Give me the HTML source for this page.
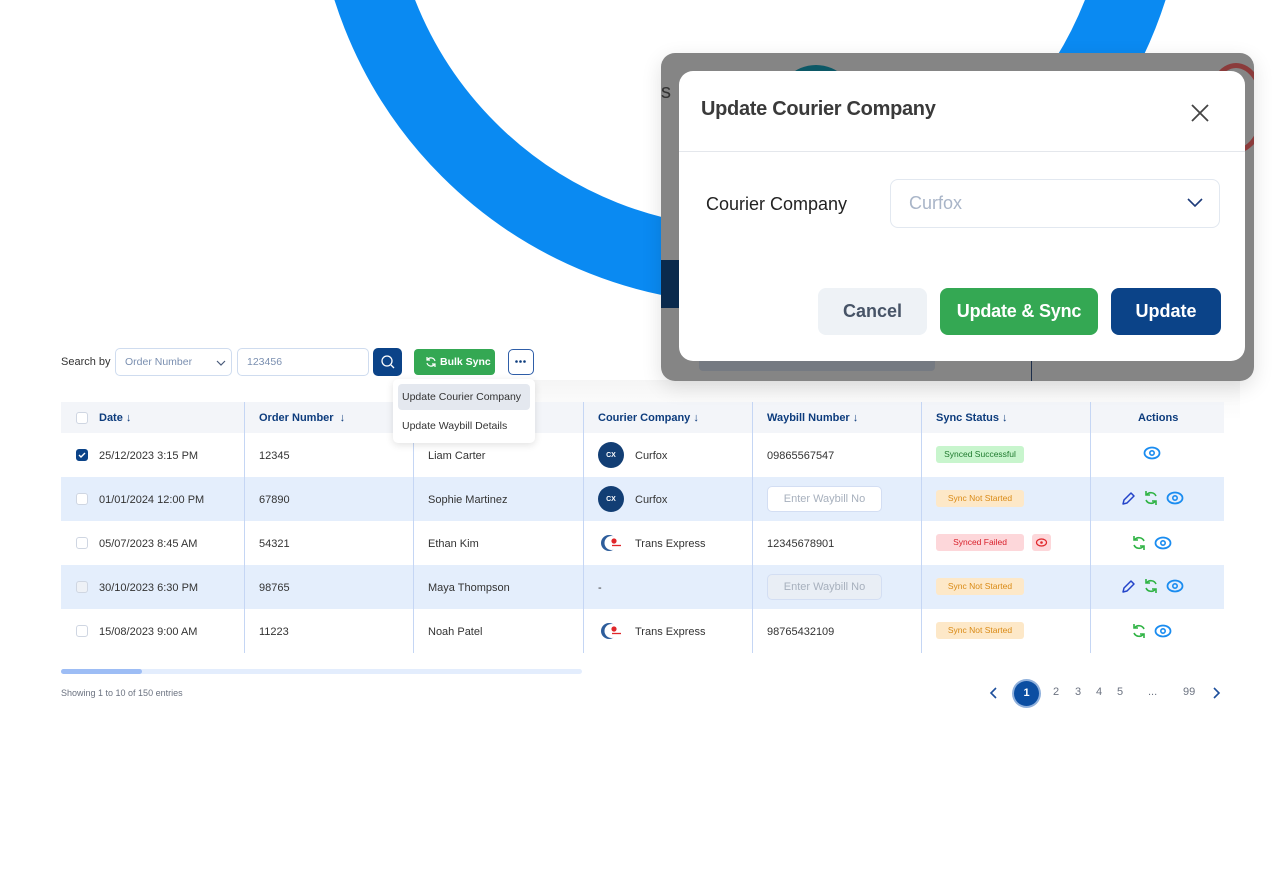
<!DOCTYPE html>
<html><head><meta charset="utf-8">
<style>
*{box-sizing:border-box;margin:0;padding:0}
body{width:1280px;height:888px;background:#fff;position:relative;overflow:hidden;font-family:"Liberation Sans",sans-serif;color:#333}
.a{position:absolute}
.t{font-size:11px;color:#333;white-space:nowrap}
.h{font-size:11px;font-weight:bold;color:#0d3c7d;white-space:nowrap}
.row{position:absolute;left:61px;width:1163px;height:44px}
.vl{position:absolute;top:402px;width:1px;height:251px;background:#c5d6f4}
.cb{position:absolute;width:12px;height:12px;border:1px solid #cfd6e2;border-radius:3px;background:#fff}
.badge{position:absolute;height:17px;border-radius:3px;font-size:8.5px;line-height:17px;text-align:center;white-space:nowrap}
.ns{background:#fde8c8;color:#d98a16;width:88px}
.logo{position:absolute;width:26px;height:26px;border-radius:50%;background:#123e74;color:#fff;font-size:7px;display:flex;align-items:center;justify-content:center;font-weight:bold}
.wb{position:absolute;width:115px;height:26px;border:1px solid #d3def3;border-radius:5px;font-size:11px;color:#a7b0bd;text-align:center;line-height:24px}
.pg{position:absolute;top:686px;font-size:11px;color:#6b7280}
</style></head><body>
<svg class="a" style="left:0;top:0" width="1280" height="888">
<circle cx="750" cy="-132" r="398" fill="none" stroke="#0a8af2" stroke-width="76"/>
</svg>
<div class="a" style="left:420px;top:380px;width:820px;height:40px;background:linear-gradient(180deg,rgba(0,0,0,0.04),rgba(0,0,0,0))"></div>

<!-- toolbar -->
<div class="a t" style="left:61px;top:356px">Search by</div>
<div class="a" style="left:115px;top:348px;width:117px;height:28px;border:1px solid #cfdcef;border-radius:5px;font-size:10.5px;color:#7a8fb0;padding:7px 9px">Order Number
<svg class="a" style="left:100px;top:10px" width="10" height="8"><path d="M1 2l4 4 4-4" stroke="#4a5b7a" fill="none" stroke-width="1.2"/></svg></div>
<div class="a" style="left:237px;top:348px;width:132px;height:28px;border:1px solid #cfdcef;border-radius:5px;font-size:10.5px;color:#7a8fb0;padding:7px 9px">123456</div>
<div class="a" style="left:373px;top:348px;width:29px;height:28px;background:#0b4388;border-radius:5px">
<svg width="29" height="28"><circle cx="14" cy="13" r="5" stroke="#fff" stroke-width="1.3" fill="none"/><path d="M18 17l3 3" stroke="#fff" stroke-width="1.3"/></svg></div>
<div class="a" style="left:414px;top:349px;width:81px;height:26px;background:#34a853;border-radius:4px;color:#fff;font-size:10.5px;font-weight:bold;line-height:26px;padding-left:26px;white-space:nowrap">Bulk Sync
<svg class="a" style="left:11px;top:7px" width="12" height="12"><path d="M10 5A4.3 4.3 0 0 0 2.5 3.5M2 7a4.3 4.3 0 0 0 7.5 1.5" stroke="#fff" stroke-width="1.2" fill="none"/><path d="M2 1v3h3M10 11V8H7" stroke="#fff" stroke-width="1.2" fill="none"/></svg></div>
<div class="a" style="left:508px;top:349px;width:26px;height:26px;border:1.5px solid #2f5ea8;border-radius:5px">
<svg width="23" height="23"><circle cx="7.5" cy="11.5" r="1.3" fill="#0d3c7d"/><circle cx="11.5" cy="11.5" r="1.3" fill="#0d3c7d"/><circle cx="15.5" cy="11.5" r="1.3" fill="#0d3c7d"/></svg></div>

<!-- table -->
<div class="row" style="top:402px;height:31px;background:#f3f5f9"></div>
<div class="row" style="top:477px;background:#e4eefc"></div>
<div class="row" style="top:565px;background:#e4eefc"></div>
<div class="vl" style="left:244px"></div><div class="vl" style="left:413px"></div><div class="vl" style="left:583px"></div><div class="vl" style="left:752px"></div><div class="vl" style="left:921px"></div><div class="vl" style="left:1090px"></div>

<div class="cb" style="left:76px;top:412px"></div>
<div class="a h" style="left:99px;top:412px">Date ↓</div>
<div class="a h" style="left:259px;top:412px">Order Number &nbsp;↓</div>
<div class="a h" style="left:598px;top:412px">Courier Company ↓</div>
<div class="a h" style="left:767px;top:412px">Waybill Number ↓</div>
<div class="a h" style="left:936px;top:412px">Sync Status ↓</div>
<div class="a h" style="left:1138px;top:412px">Actions</div>

<!-- row1 -->
<div class="cb" style="left:76px;top:449px;background:#0b4388;border-color:#0b4388"><svg class="a" style="left:0px;top:0px" width="10" height="10"><path d="M2 5l2 2 4-4" stroke="#fff" stroke-width="1.4" fill="none"/></svg></div>
<div class="a t" style="left:99px;top:450px">25/12/2023 3:15 PM</div>
<div class="a t" style="left:259px;top:450px">12345</div>
<div class="a t" style="left:428px;top:450px">Liam Carter</div>
<div class="logo" style="left:598px;top:442px">CX</div>
<div class="a t" style="left:635px;top:450px">Curfox</div>
<div class="a t" style="left:767px;top:450px">09865567547</div>
<div class="badge" style="left:936px;top:446px;width:88px;background:#c8f5cd;color:#1f7a2e">Synced Successful</div>

<!-- row2 -->
<div class="cb" style="left:76px;top:493px"></div>
<div class="a t" style="left:99px;top:494px">01/01/2024 12:00 PM</div>
<div class="a t" style="left:259px;top:494px">67890</div>
<div class="a t" style="left:428px;top:494px">Sophie Martinez</div>
<div class="logo" style="left:598px;top:486px">CX</div>
<div class="a t" style="left:635px;top:494px">Curfox</div>
<div class="wb" style="left:767px;top:486px;background:#fff">Enter Waybill No</div>
<div class="badge ns" style="left:936px;top:490px">Sync Not Started</div>

<!-- row3 -->
<div class="cb" style="left:76px;top:537px"></div>
<div class="a t" style="left:99px;top:538px">05/07/2023 8:45 AM</div>
<div class="a t" style="left:259px;top:538px">54321</div>
<div class="a t" style="left:428px;top:538px">Ethan Kim</div>
<svg class="a" style="left:598px;top:532px" width="26" height="22"><circle cx="11" cy="11" r="8" fill="#2d5d9b"/><circle cx="13.5" cy="11" r="7" fill="#fff"/><circle cx="16" cy="9" r="2.6" fill="#e0262a"/><path d="M14 13.5h9" stroke="#e0262a" stroke-width="1.3"/></svg>
<div class="a t" style="left:635px;top:538px">Trans Express</div>
<div class="a t" style="left:767px;top:538px">12345678901</div>
<div class="badge" style="left:936px;top:534px;width:88px;background:#fdd7da;color:#d81f2a">Synced Failed</div>
<div class="badge" style="left:1032px;top:534px;width:19px;background:#fdd7da"><svg width="19" height="17"><ellipse cx="9.5" cy="8.5" rx="5" ry="3.5" stroke="#e0262a" fill="none" stroke-width="1.2"/><circle cx="9.5" cy="8.5" r="1.3" fill="#e0262a"/></svg></div>

<!-- row4 -->
<div class="cb" style="left:76px;top:581px;background:#eef1f6"></div>
<div class="a t" style="left:99px;top:582px">30/10/2023 6:30 PM</div>
<div class="a t" style="left:259px;top:582px">98765</div>
<div class="a t" style="left:428px;top:582px">Maya Thompson</div>
<div class="a t" style="left:598px;top:582px">-</div>
<div class="wb" style="left:767px;top:574px;background:#e9eef5">Enter Waybill No</div>
<div class="badge ns" style="left:936px;top:578px">Sync Not Started</div>

<!-- row5 -->
<div class="cb" style="left:76px;top:625px"></div>
<div class="a t" style="left:99px;top:626px">15/08/2023 9:00 AM</div>
<div class="a t" style="left:259px;top:626px">11223</div>
<div class="a t" style="left:428px;top:626px">Noah Patel</div>
<svg class="a" style="left:598px;top:620px" width="26" height="22"><circle cx="11" cy="11" r="8" fill="#2d5d9b"/><circle cx="13.5" cy="11" r="7" fill="#fff"/><circle cx="16" cy="9" r="2.6" fill="#e0262a"/><path d="M14 13.5h9" stroke="#e0262a" stroke-width="1.3"/></svg>
<div class="a t" style="left:635px;top:626px">Trans Express</div>
<div class="a t" style="left:767px;top:626px">98765432109</div>
<div class="badge ns" style="left:936px;top:622px">Sync Not Started</div>

<!-- action icons -->
<svg class="a" style="left:0;top:0" width="1280" height="888">
<defs>
<g id="eye"><ellipse cx="0" cy="0" rx="7.5" ry="5.5" stroke="#1a8cf0" stroke-width="1.8" fill="none"/><circle cx="0" cy="0" r="2.2" stroke="#1a8cf0" stroke-width="1.6" fill="none"/></g>
<g id="sync"><path d="M5 -2A5.5 5.5 0 0 0 -4.5 -3M-5 2A5.5 5.5 0 0 0 4.5 3" stroke="#2fb344" stroke-width="1.6" fill="none"/><path d="M-5 -7v4h4M5 7V3H1" stroke="#2fb344" stroke-width="1.6" fill="none"/></g>
<g id="pen"><path d="M-5 6l1-4 7-7 3 3-7 7z" stroke="#2343c9" stroke-width="1.5" fill="none" stroke-linejoin="round"/></g>
</defs>
<use href="#eye" x="1152" y="453"/>
<use href="#pen" x="1128" y="498"/><use href="#sync" x="1151" y="498"/><use href="#eye" x="1175" y="498"/>
<use href="#sync" x="1139" y="543"/><use href="#eye" x="1163" y="543"/>
<use href="#pen" x="1128" y="586"/><use href="#sync" x="1151" y="586"/><use href="#eye" x="1175" y="586"/>
<use href="#sync" x="1139" y="631"/><use href="#eye" x="1163" y="631"/>
</svg>

<!-- dropdown (on top of table) -->
<div class="a" style="left:393px;top:379px;width:142px;height:64px;background:#fff;border-radius:5px;box-shadow:0 2px 8px rgba(0,0,0,0.12)"></div>
<div class="a" style="left:398px;top:384px;width:132px;height:26px;background:#e4e8ef;border-radius:4px"></div>
<div class="a t" style="left:402px;top:391px;font-size:10.5px">Update Courier Company</div>
<div class="a t" style="left:402px;top:420px;font-size:10.5px">Update Waybill Details</div>

<!-- scrollbar / footer -->
<div class="a" style="left:61px;top:669px;width:521px;height:5px;background:#e3edfd;border-radius:3px"></div>
<div class="a" style="left:61px;top:669px;width:81px;height:5px;background:#9dbdf5;border-radius:3px"></div>
<div class="a" style="left:61px;top:688px;font-size:9px;color:#6b7280">Showing 1 to 10 of 150 entries</div>
<svg class="a" style="left:989px;top:687px" width="10" height="12"><path d="M7 1L2 6l5 5" stroke="#1d4f9c" stroke-width="1.6" fill="none"/></svg>
<div class="a" style="left:1014px;top:681px;width:25px;height:25px;border-radius:50%;background:#0b4ea2;box-shadow:0 0 0 2px #8fb0dc;color:#fff;font-size:11px;font-weight:bold;text-align:center;line-height:25px">1</div>
<div class="pg" style="left:1053px">2</div><div class="pg" style="left:1075px">3</div><div class="pg" style="left:1096px">4</div><div class="pg" style="left:1117px">5</div><div class="pg" style="left:1148px">...</div><div class="pg" style="left:1183px">99</div>
<svg class="a" style="left:1211px;top:687px" width="10" height="12"><path d="M3 1l5 5-5 5" stroke="#1d4f9c" stroke-width="1.6" fill="none"/></svg>

<!-- modal backdrop -->
<div class="a" style="left:661px;top:53px;width:593px;height:328px;background:#858585;border-radius:14px;overflow:hidden;box-shadow:0 6px 20px rgba(0,0,0,0.12)">
<div class="a" style="left:115px;top:12px;width:80px;height:40px;border-radius:40px 40px 0 0;background:#0c5866"></div>
<div class="a" style="left:0;top:207px;width:18px;height:48px;background:#0a2a4d"></div>
<div class="a" style="left:38px;top:300px;width:236px;height:18px;background:#757a82;border-radius:4px"></div>
<div class="a" style="left:370px;top:308px;width:1px;height:20px;background:#1d2e4a"></div>
<div class="a" style="left:545px;top:10px;width:60px;height:90px;border:5px solid #8b3b3b;border-radius:50%"></div>
<div class="a" style="left:0;top:28px;font-size:20px;color:#333">s</div>
</div>
<div class="a" style="left:679px;top:71px;width:566px;height:290px;background:#fff;border-radius:14px">
<div class="a" style="left:22px;top:27px;font-size:20px;font-weight:bold;color:#3a3a3a;letter-spacing:-0.3px">Update Courier Company</div>
<svg class="a" style="left:511px;top:32px" width="20" height="20"><path d="M2 2l16 16M18 2L2 18" stroke="#444" stroke-width="1.8"/></svg>
<div class="a" style="left:0;top:80px;width:566px;height:1px;background:#e4e7ec"></div>
<div class="a" style="left:27px;top:123px;font-size:18px;color:#222">Courier Company</div>
<div class="a" style="left:211px;top:108px;width:330px;height:49px;border:1px solid #e2e8f0;border-radius:8px;font-size:18px;color:#a9b5c8;padding:13px 18px">Curfox
<svg class="a" style="left:296px;top:18px" width="16" height="10"><path d="M1 1l7 7 7-7" stroke="#1d3b7a" stroke-width="1.6" fill="none"/></svg></div>
<div class="a" style="left:139px;top:217px;width:109px;height:47px;background:#eef2f6;border-radius:8px;font-size:18px;font-weight:bold;color:#475467;text-align:center;line-height:47px">Cancel</div>
<div class="a" style="left:261px;top:217px;width:158px;height:47px;background:#34a853;border-radius:8px;font-size:18px;font-weight:bold;color:#fff;text-align:center;line-height:47px;letter-spacing:-0.2px">Update &amp; Sync</div>
<div class="a" style="left:432px;top:217px;width:110px;height:47px;background:#0b4388;border-radius:8px;font-size:18px;font-weight:bold;color:#fff;text-align:center;line-height:47px">Update</div>
</div>
</body></html>
